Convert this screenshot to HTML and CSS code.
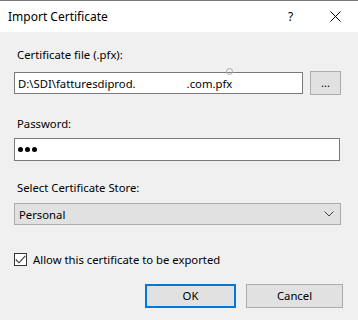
FILE: index.html
```html
<!DOCTYPE html>
<html lang="en">
<head>
  <meta charset="UTF-8" />
  <title>Import Certificate</title>
  <link rel="stylesheet" href="styles.css">
</head>
<body>
  <div class="dialog">
    <div class="titlebar">
      <span class="title">Import Certificate</span>
      <span class="help">?</span>
      <svg class="close" width="11" height="11" viewBox="0 0 11 11">
        <path d="M0.5 0.5 L10.5 10.5 M10.5 0.5 L0.5 10.5" stroke="#000" stroke-width="1" fill="none"/>
      </svg>
    </div>

    <div class="content">
      <div class="label first">Certificate file (.pfx):</div>
      <div class="file-row">
        <div class="field file-field">
          <span>D:\SDI\fatturesdiprod.</span><span class="gap"></span><span>.com.pfx</span>
          <span class="cursor-ring"></span>
        </div>
        <div class="browse">...</div>
      </div>

      <div class="label second">Password:</div>
      <div class="field pass-field"><span class="dot"></span><span class="dot"></span><span class="dot"></span></div>

      <div class="label third">Select Certificate Store:</div>
      <div class="combo">
        <span>Personal</span>
        <svg width="10" height="6" viewBox="0 0 10 6">
          <path d="M0.5 0.5 L5 5 L9.5 0.5" stroke="#444" stroke-width="1" fill="none"/>
        </svg>
      </div>

      <div class="check-row">
        <span class="checkbox">
          <svg width="11" height="9" viewBox="0 0 11 9">
            <path d="M0.8 4.5 L4 7.8 L10.3 0.8" stroke="#333" stroke-width="1.1" fill="none"/>
          </svg>
        </span>
        <span>Allow this certificate to be exported</span>
      </div>

      <div class="buttons">
        <div class="btn default">OK</div>
        <div class="btn">Cancel</div>
      </div>
    </div>
  </div>
</body>
</html>
```

FILE: styles.css
```css
body {
  margin: 0;
  font-family: "Noto Sans", "Open Sans", sans-serif;
  font-size: 11.3px;
  color: #000;
  background-color: #f0f0f0;
}
.dialog {
  width: 358px;
  height: 320px;
  background-color: #f0f0f0;
  overflow: hidden;
}
.titlebar {
  height: 31px;
  background-color: #fff;
  border-top: 1px solid #7a7a7a;
  display: flex;
  align-items: center;
  padding-left: 8px;
}
.title {
  flex: 1;
  font-size: 12px;
}
.help {
  width: 10px;
  margin-right: 32px;
  font-size: 12px;
}
.close {
  margin-right: 17px;
}

.content {
  padding: 0 17px 0 14px;
  display: flex;
  flex-direction: column;
}
.label {
  height: 17px;
  line-height: 17px;
  padding-left: 3px;
}
.label.first {
  margin-top: 14px;
  margin-bottom: 8px;
}
.label.second {
  margin-top: 20px;
  margin-bottom: 6px;
}
.label.third {
  margin-top: 18px;
  margin-bottom: 7px;
}
.field {
  height: 22px;
  box-sizing: border-box;
  border: 1px solid #7a7a7a;
  background-color: #fff;
  display: flex;
  align-items: center;
  padding-left: 3px;
  white-space: nowrap;
}
.file-row {
  display: flex;
  align-items: center;
  gap: 7px;
}
.file-field {
  width: 289px;
  position: relative;
}
.gap {
  width: 51px;
}
.cursor-ring {
  position: absolute;
  left: 211px;
  top: -5px;
  width: 5px;
  height: 5px;
  border: 1px solid #aaa;
  border-radius: 50%;
}
.browse {
  width: 31px;
  height: 24px;
  box-sizing: border-box;
  border: 1px solid #adadad;
  background-color: #e1e1e1;
  text-align: center;
  line-height: 22px;
}
.pass-field {
  height: 23px;
  margin-right: 1px;
  gap: 2px;
}
.dot {
  width: 5px;
  height: 5px;
  border-radius: 50%;
  background-color: #000;
}
.combo {
  height: 22px;
  box-sizing: border-box;
  border: 1px solid #adadad;
  background-color: #e1e1e1;
  display: flex;
  align-items: center;
  justify-content: space-between;
  padding: 0 6px 0 4px;
}
.check-row {
  display: flex;
  align-items: center;
  margin-top: 27px;
  height: 14px;
}
.checkbox {
  width: 13px;
  height: 13px;
  box-sizing: border-box;
  border: 1px solid #333;
  background-color: #fff;
  display: flex;
  align-items: center;
  justify-content: center;
  margin-right: 6px;
}
.buttons {
  display: flex;
  justify-content: flex-end;
  gap: 10px;
  margin-top: 18px;
  margin-right: -2px;
}
.btn {
  width: 97px;
  height: 24px;
  box-sizing: border-box;
  border: 1px solid #adadad;
  background-color: #e1e1e1;
  text-align: center;
  line-height: 22px;
}
.btn.default {
  width: 91px;
  border: 2px solid #0078d7;
  line-height: 20px;
}
```
